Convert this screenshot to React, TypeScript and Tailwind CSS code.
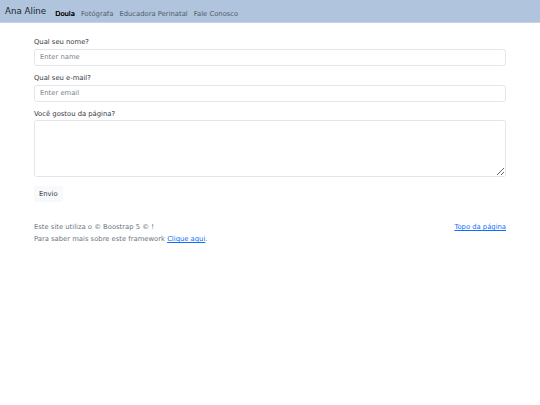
const navLinks = ['Doula', 'Fotógrafa', 'Educadora Perinatal', 'Fale Conosco'];

function Navbar() {
  return (
    <nav className="h-[23px] bg-[#b0c4de] border-b border-[#c6d3e4] flex items-center px-[5px]">
      <a href="#" className="text-[8.7px] leading-[12px] text-[#212529] mr-[6px]">
        Ana Aline
      </a>
      <ul className="flex items-center">
        {navLinks.map((link, i) => (
          <li key={link}>
            <a
              href="#"
              className={
                i === 0
                  ? 'px-[3px] text-[6.8px] leading-[10.5px] text-[#000] [text-shadow:0_0_0.3px_#000]'
                  : 'px-[3px] text-[6.8px] leading-[10.5px] text-[#515a66]'
              }
            >
              {link}
            </a>
          </li>
        ))}
      </ul>
    </nav>
  );
}

function Field({ label, placeholder }: { label: string; placeholder: string }) {
  return (
    <div className="mb-[7px]">
      <label className="block text-[6.8px] leading-[10.5px] text-[#34393e] mb-[2px]">{label}</label>
      <input
        type="text"
        placeholder={placeholder}
        className="block w-full h-[16.5px] px-[5px] text-[6.8px] border border-[#e2e5e9] rounded-[2.6px] bg-white outline-none placeholder:text-[#7b8289]"
      />
    </div>
  );
}

export default function App() {
  return (
    <div className="min-h-screen bg-white text-[#212529] font-['DejaVu_Sans',sans-serif]">
      <Navbar />
      <div className="mx-[34px] pt-[13.5px]">
        <form onSubmit={(e) => e.preventDefault()}>
          <Field label="Qual seu nome?" placeholder="Enter name" />
          <Field label="Qual seu e-mail?" placeholder="Enter email" />
          <div className="mb-[9px]">
            <label className="block text-[6.8px] leading-[10.5px] text-[#34393e] mb-[1px]">
              Você gostou da página?
            </label>
            <textarea className="block w-full h-[57px] px-[5px] py-[2px] text-[6.8px] border border-[#e2e5e9] rounded-[2.6px] outline-none" />
          </div>
          <button
            type="submit"
            className="block h-[16px] px-[5px] text-[6.8px] leading-[10.5px] text-[#34393e] bg-[#f8f9fa] rounded-[2.6px]"
          >
            Envio
          </button>
        </form>

        <footer className="mt-[19px] flex justify-between text-[6.8px] leading-[12px] text-[#6c757d]">
          <div>
            <p>Este site utiliza o © Boostrap 5 © !</p>
            <p>
              Para saber mais sobre este framework{' '}
              <a href="#" className="text-[#0d6efd] underline">
                Clique aqui
              </a>
              .
            </p>
          </div>
          <a href="#" className="text-[#0d6efd] underline">
            Topo da página
          </a>
        </footer>
      </div>
    </div>
  );
}
